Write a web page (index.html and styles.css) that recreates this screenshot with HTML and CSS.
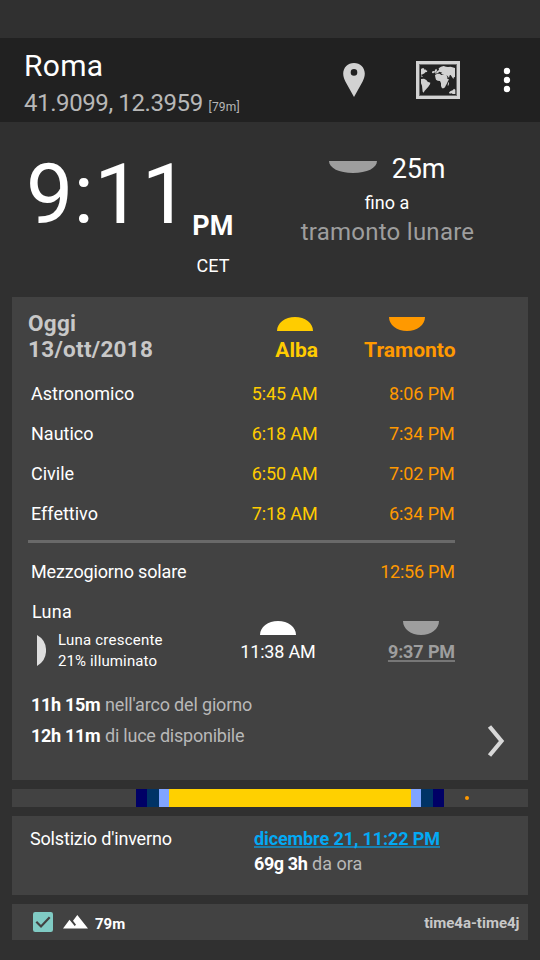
FILE: index.html
```
<!DOCTYPE html>
<html lang="it">
<head>
<meta charset="utf-8">
<title>Roma</title>
<link rel="stylesheet" href="styles.css">
</head>
<body>
<header class="bar">
  <div class="place">
    <h1 class="city">Roma</h1>
    <div class="coords"><span class="latlon">41.9099, 12.3959</span><span class="alt">[79m]</span></div>
  </div>
  <svg class="pin" width="22" height="34" viewBox="0 0 22 34"><path fill="#d2d2d2" fill-rule="evenodd" d="M11 0C4.800 0 .2 4.600.2 10.600c0 2.900 1 5.600 2.300 8.200L11 34l8.500-15.200c1.300-2.600 2.300-5.300 2.300-8.200C21.800 4.600 17.200 0 11 0zm0 6.100a3.300 3.300 0 1 1 0 6.600 3.300 3.300 0 0 1 0-6.600z"/></svg>
  <svg class="map" width="44" height="38" viewBox="288 93 132 114">
    <rect x="292.500" y="97.500" width="123" height="105" fill="#222" stroke="#d2d2d2" stroke-width="9"/>
    <rect x="298.500" y="103.500" width="111" height="93" fill="none" stroke="#6c6c6c" stroke-width="3"/>
    <g fill="#d2d2d2">
      <path d="M303 118l3-3h6l1 4 3-1 2 3 4 1-1 4-5 1-4 4-4 1-2 3-3-2z"/>
      <path d="M303 136l5 3-1 2-4-2z"/>
      <path d="M303 147l9-1 7 4 4 5 8 3-1 5-5 7-4 5-4 4-3 3-2 4v2l-4-3-1-8-1-10-3-7z"/>
      <path d="M344 125l1-6 5-3v4l2 3-5 3zM348 128l5-6 4-2-1-5 7-5 8-2 7 2 6 1 8-1 13 4v28l-3-1-2 6-4-6-4-6-3 1-2 8-4-6-4-2 4 6-6 5-2-6-4-7-5-1-3-3 4-2-9-3-4 4-7 2-4-4-3 3-4-1 1-5 5-1z"/>
      <path d="M345 135l7-4 7 0 5 4 10-1 5 6 4 7 4 1-4 7-3 7-3 5-2 5-4 3-5 0-3-7v-8l-3-7-7-1-5-3-2-7z"/>
      <path d="M384 158l3-1-1 9-3 1z"/>
      <path d="M387 187l5-4 6-2 4-5 4 3v13h-8l-3-2-6 1z"/>
    </g>
  </svg>
  <svg class="more" width="8" height="26" viewBox="0 0 8 26" fill="#fff"><circle cx="4" cy="4" r="3.200"/><circle cx="4" cy="13" r="3.200"/><circle cx="4" cy="22" r="3.200"/></svg>
</header>

<section class="now">
  <div class="clock">9:11</div>
  <div class="zone"><span class="ampm">PM</span><span class="tz">CET</span></div>
  <div class="countdown">
    <div class="remain"><svg class="half" width="48" height="12" viewBox="0 0 48 12"><path fill="#9e9e9e" d="M0 0h48c0 7-10 12-24 12S0 7 0 0z"/></svg><span>25m</span></div>
    <div class="until">fino a</div>
    <div class="event">tramonto lunare</div>
  </div>
</section>

<main>
  <section class="card day">
    <div class="heads">
      <div class="date">Oggi<br>13/ott/2018</div>
      <div class="head rise"><svg width="36" height="14" viewBox="0 0 36 14"><path fill="currentColor" d="M0 14C0 6 8 0 18 0s18 6 18 14z"/></svg><span>Alba</span></div>
      <div class="head set"><svg width="36" height="14" viewBox="0 0 36 14"><path fill="currentColor" d="M0 0h36c0 8-8 14-18 14S0 8 0 0z"/></svg><span>Tramonto</span></div>
    </div>
    <div class="row"><span>Astronomico</span><span class="rise">5:45 AM</span><span class="set">8:06 PM</span></div>
    <div class="row"><span>Nautico</span><span class="rise">6:18 AM</span><span class="set">7:34 PM</span></div>
    <div class="row"><span>Civile</span><span class="rise">6:50 AM</span><span class="set">7:02 PM</span></div>
    <div class="row"><span>Effettivo</span><span class="rise">7:18 AM</span><span class="set">6:34 PM</span></div>
    <hr class="rule">
    <div class="row noon"><span class="noon-label">Mezzogiorno solare</span><span></span><span class="set tight">12:56 PM</span></div>
    <div class="moon">
      <div class="moon-info">
        <div class="moon-title">Luna</div>
        <div class="phase">
          <svg width="9" height="31" viewBox="0 0 9 31"><path fill="#dedede" d="M0 0a17.800 17.800 0 0 1 0 31z"/></svg>
          <div><div class="phase-name">Luna crescente</div><div class="phase-pct">21% illuminato</div></div>
        </div>
      </div>
      <div class="moon-time moonrise"><svg width="36" height="14" viewBox="0 0 36 14"><path fill="currentColor" d="M0 14C0 6 8 0 18 0s18 6 18 14z"/></svg><span>11:38 AM</span></div>
      <div class="moon-time moonset"><svg width="36" height="14" viewBox="0 0 36 14"><path fill="currentColor" d="M0 0h36c0 8-8 14-18 14S0 8 0 0z"/></svg><span>9:37 PM</span></div>
    </div>
    <div class="foot">
      <div class="lengths">
        <div class="length"><b>11h 15m</b><span>nell'arco del giorno</span></div>
        <div class="length light"><b>12h 11m</b><span>di luce disponibile</span></div>
      </div>
      <svg class="next" width="18" height="34" viewBox="0 0 18 34"><path fill="none" stroke="#d8d8d8" stroke-width="4.200" d="M2.500 2.500L14.500 17 2.500 31.500"/></svg>
    </div>
  </section>

  <div class="card band">
    <i class="astro"></i><i class="naut"></i><i class="civil"></i><i class="daylight"></i><i class="civil"></i><i class="naut"></i><i class="astro"></i><i class="dot"></i>
  </div>

  <section class="card solstice">
    <div class="sol-name">Solstizio d'inverno</div>
    <div>
      <div class="sol-date">dicembre 21, 11:22 PM</div>
      <div class="sol-in"><b>69g 3h</b><span>da ora</span></div>
    </div>
  </section>

  <footer class="card status">
    <svg width="20" height="20" viewBox="0 0 20 20"><rect width="20" height="20" rx="2.200" fill="#80cbc4"/><path fill="none" stroke="#424242" stroke-width="2.200" d="M3.300 9.800L8 14.500 16.700 5.300"/></svg>
    <svg class="peaks" width="25" height="14" viewBox="0 0 25 14"><path fill="#fff" d="M0 13.500L6.500 4.800 11.700 11l1.300-1.200-3-4L14.300 0 25 13.500z"/></svg>
    <b class="height">79m</b>
    <b class="source">time4a-time4j</b>
  </footer>
</main>
</body>
</html>
```
FILE: styles.css
```
* { box-sizing: border-box; }
body {
  margin: 0;
  padding-top: 38px;
  width: 540px;
  height: 960px;
  overflow: hidden;
  background: #303030;
  color: #fff;
  font: 18px/24px Roboto, sans-serif;
}
svg { display: block; flex: none; }

.bar { display: flex; height: 84px; background: #212121; padding: 10px 0 0 24px; }
.place { width: 319px; }
.city { margin: 0; font-size: 30px; line-height: 36px; font-weight: 400; letter-spacing: .3px; }
.coords { display: flex; margin-top: 4px; line-height: 30px; color: #b8b8b8; }
.latlon { font-size: 24px; letter-spacing: -.4px; width: 184.500px; white-space: nowrap; }
.alt { font-size: 12px; line-height: 38px; height: 30px; letter-spacing: .2px; }
.pin { margin-top: 15px; }
.map { margin: 13px 0 0 51px; }
.more { margin: 19px 0 0 43px; }

.now { display: flex; height: 175px; }
.clock { width: 166px; margin-left: 26px; padding-top: 23px; font-size: 84px; line-height: 100px; letter-spacing: .3px; }
.zone { display: flex; flex-direction: column; width: 42px; padding-top: 88px; align-items: center; }
.ampm { font-size: 27px; line-height: 32px; font-weight: 700; letter-spacing: .3px; }
.tz { margin-top: 12px; }
.countdown { width: 306px; padding: 31px 0 0; display: flex; flex-direction: column; align-items: center; }
.remain { display: flex; font-size: 27px; line-height: 32px; gap: 15px; letter-spacing: -.2px; }
.half { margin-top: 8px; }
.until { margin-top: 6px; }
.event { margin: 2px 0 0 1px; font-size: 24px; line-height: 30px; letter-spacing: .26px; color: #9e9e9e; }

main { display: flex; flex-direction: column; gap: 9px; margin: 0 12px; }
.card { background: #424242; }
.rise { color: #ffcc00; }
.set { color: #ff9900; }

.day { height: 483px; padding: 13px 0 0 16px; }
.heads { display: grid; grid-template-columns: 190px 100px 137.500px; height: 64px; }
.date { font-size: 22.500px; line-height: 26px; font-weight: 700; letter-spacing: .28px; color: #c8c8c8; }
.head { display: flex; flex-direction: column; align-items: flex-end; padding-top: 7px; font-size: 21px; line-height: 26px; font-weight: 700; }
.head svg { margin: 0 5px 6px 0; }
.head.set svg { margin-right: 31px; }

.row { display: grid; grid-template-columns: 187px 100px 137px; margin-left: 3px; line-height: 40px; }
.row .rise, .row .set { text-align: right; letter-spacing: -.1px; padding-right: .4px; }
.row .tight { letter-spacing: -.25px; }
.rule { width: 427px; height: 3px; margin: 6px 0 9px; border: 0; background: #696969; }
.noon-label { letter-spacing: -.14px; white-space: nowrap; }

.moon { display: flex; height: 78px; }
.moon-info { width: 208px; padding-left: 4px; }
.moon-title { line-height: 40px; letter-spacing: .3px; }
.phase { display: flex; gap: 12px; padding-left: 5px; margin-top: -2px; font-size: 15px; line-height: 21px; }
.phase svg { margin-top: 5px; }
.phase-name { letter-spacing: .22px; }
.phase-pct { letter-spacing: .13px; }
.moon-time { display: flex; flex-direction: column; padding-top: 29px; }
.moon-time span { line-height: 24px; margin-top: 5px; white-space: nowrap; }
.moonrise { width: 79.500px; align-items: flex-end; letter-spacing: -.2px; }
.moonrise svg { margin-right: 19.500px; }
.moonset { width: 139.500px; align-items: flex-end; color: #9e9e9e; font-weight: 700; letter-spacing: -.12px; }
.moonset svg { margin-right: 16px; }
.moonset span { text-decoration: underline; text-decoration-thickness: 2px; text-underline-offset: 2px; text-decoration-color: #777; text-decoration-skip-ink: none; }

.foot { display: flex; justify-content: space-between; padding: 19px 23px 0 3px; }
.length { display: flex; line-height: 31px; }
.length b { width: 74px; letter-spacing: -.3px; }
.length span { color: #b8b8b8; letter-spacing: -.17px; }
.length.light span { letter-spacing: -.23px; }
.next { margin-top: 35px; }

.band { display: flex; align-items: center; height: 18px; padding-left: 124px; }
.band i { height: 18px; }
.astro { width: 11px; background: #000066; }
.naut { width: 12px; background: #003366; }
.civil { width: 10px; background: #80a4ff; }
.daylight { width: 242px; background: #ffd000; }
.band .dot { width: 4px; height: 4px; margin-left: 21px; border-radius: 50%; background: #ff9900; }

.solstice { display: grid; grid-template-columns: 224px 1fr; height: 79px; padding: 11px 0 0 18px; }
.sol-name { letter-spacing: -.17px; }
.sol-date { width: max-content; color: #03a9f4; font-weight: 700; letter-spacing: -.1px; text-decoration: underline; text-decoration-thickness: 2px; text-underline-offset: 1px; text-decoration-color: #1a7fae; text-decoration-skip-ink: none; }
.sol-in { display: flex; margin-top: 1px; }
.sol-in b { width: 58px; letter-spacing: -.4px; }
.sol-in span { color: #b8b8b8; }

.status { display: flex; align-items: center; height: 36px; padding: 0 8.500px 0 21px; font-size: 15px; }
.peaks { margin-left: 10px; }
.height { margin-left: 7px; padding-top: 3px; }
.source { margin-left: auto; color: #c8c8c8; padding-top: 2px; }
```
